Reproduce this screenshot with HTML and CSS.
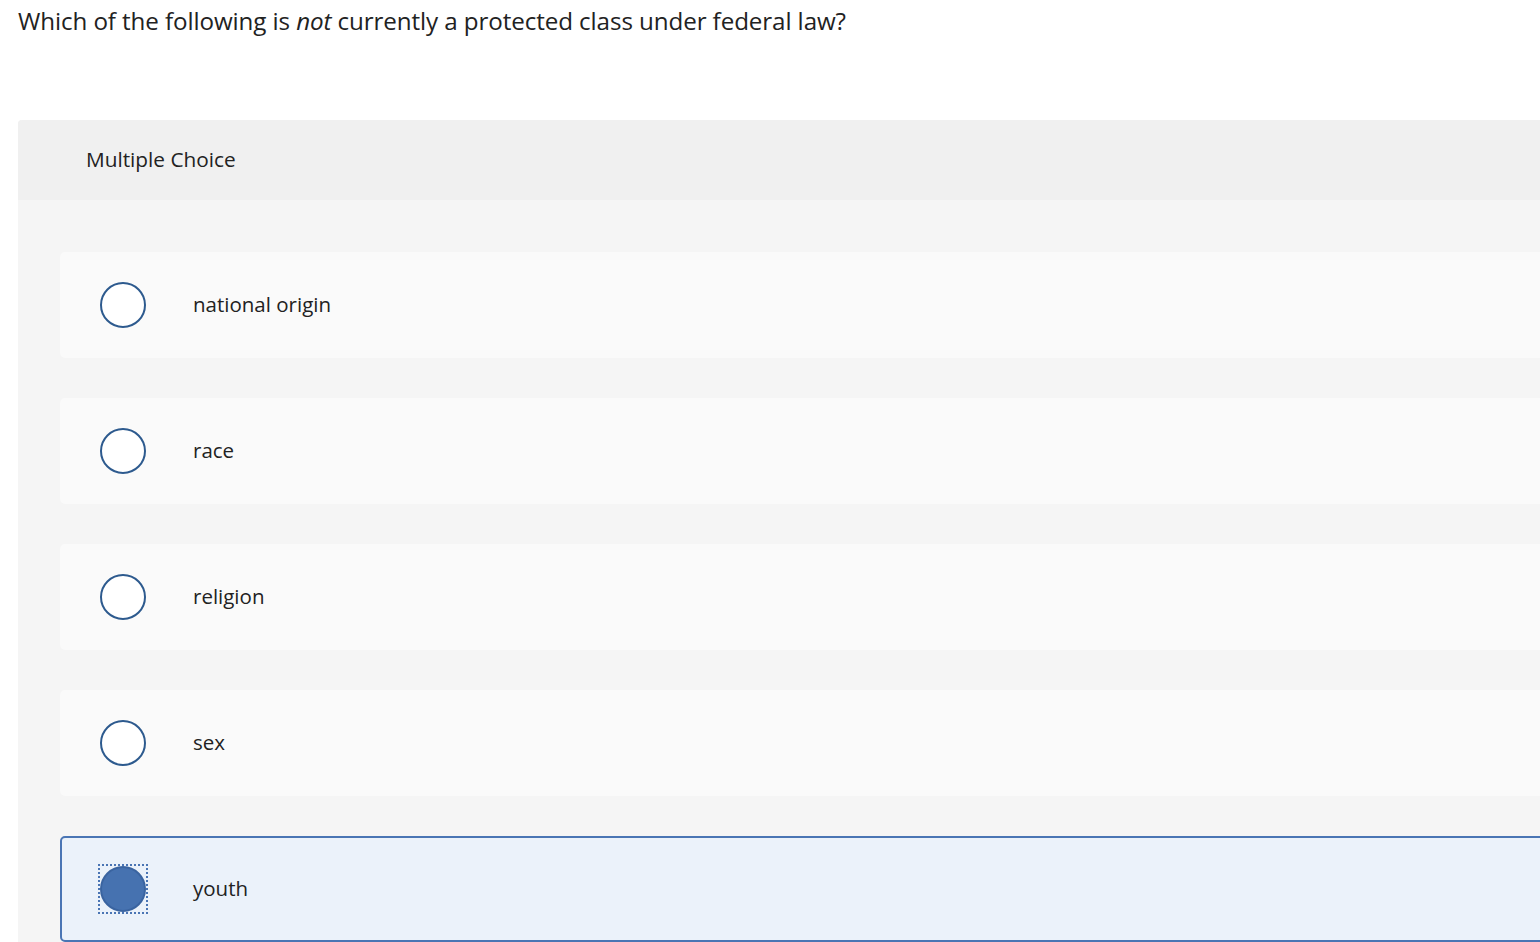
FILE: index.html
```html
<!DOCTYPE html>
<html>
<head>
<meta charset="utf-8">
<link rel="stylesheet" href="styles.css">
</head>
<body>
<div class="page">
  <p class="question">Which of the following is <em>not</em> currently a protected class under federal law?</p>
  <div class="panel">
    <div class="panel-head">Multiple Choice</div>
    <div class="panel-body">
      <div class="option"><span class="radio"></span><span class="label">national origin</span></div>
      <div class="option"><span class="radio"></span><span class="label">race</span></div>
      <div class="option"><span class="radio"></span><span class="label">religion</span></div>
      <div class="option"><span class="radio"></span><span class="label">sex</span></div>
      <div class="option selected"><span class="radio-focus"><span class="radio"></span></span><span class="label">youth</span></div>
    </div>
  </div>
</div>
</body>
</html>
```
FILE: styles.css
```css
html, body {
  margin: 0;
  padding: 0;
  background: #ffffff;
  overflow: hidden;
}
body {
  font-family: "Open Sans", Lato, "Liberation Sans", sans-serif;
  color: #222222;
  width: 1540px;
  height: 942px;
}
.page {
  padding-left: 18px;
}
.question {
  margin: 0;
  padding-top: 5px;
  font-size: 24.2px;
  line-height: 32px;
  height: 115px;
  white-space: nowrap;
  letter-spacing: -0.1px;
}
.question em {
  font-style: italic;
}
.panel {
  width: 1560px;
  border-top-left-radius: 4px;
  overflow: hidden;
  background: #f5f5f5;
}
.panel-head {
  height: 80px;
  background: #f0f0f0;
  display: flex;
  align-items: center;
  padding-left: 68px;
  font-size: 20.8px;
  padding-bottom: 3px;
  box-sizing: border-box;
}
.panel-body {
  padding: 52px 0 40px 42px;
  display: flex;
  flex-direction: column;
  gap: 40px;
}
.option {
  height: 106px;
  box-sizing: border-box;
  background: #fafafa;
  border-radius: 5px;
  display: flex;
  align-items: center;
  padding-left: 40px;
  font-size: 20.5px;
}
.radio {
  width: 46px;
  height: 46px;
  box-sizing: border-box;
  border: 2px solid #2d5a8e;
  border-radius: 50%;
  background: #ffffff;
  flex: none;
}
.label {
  margin-left: 47px;
  padding-bottom: 2px;
}
.option.selected {
  background: #ebf2fa;
  border: 2px solid #4a75b4;
  padding-left: 38px;
}
.radio-focus {
  display: flex;
  flex: none;
  outline: 2px dotted #4a75b4;
  outline-offset: 0;
}
.selected .radio {
  background: #4672b0;
  border-color: #3a64a0;
}
```
